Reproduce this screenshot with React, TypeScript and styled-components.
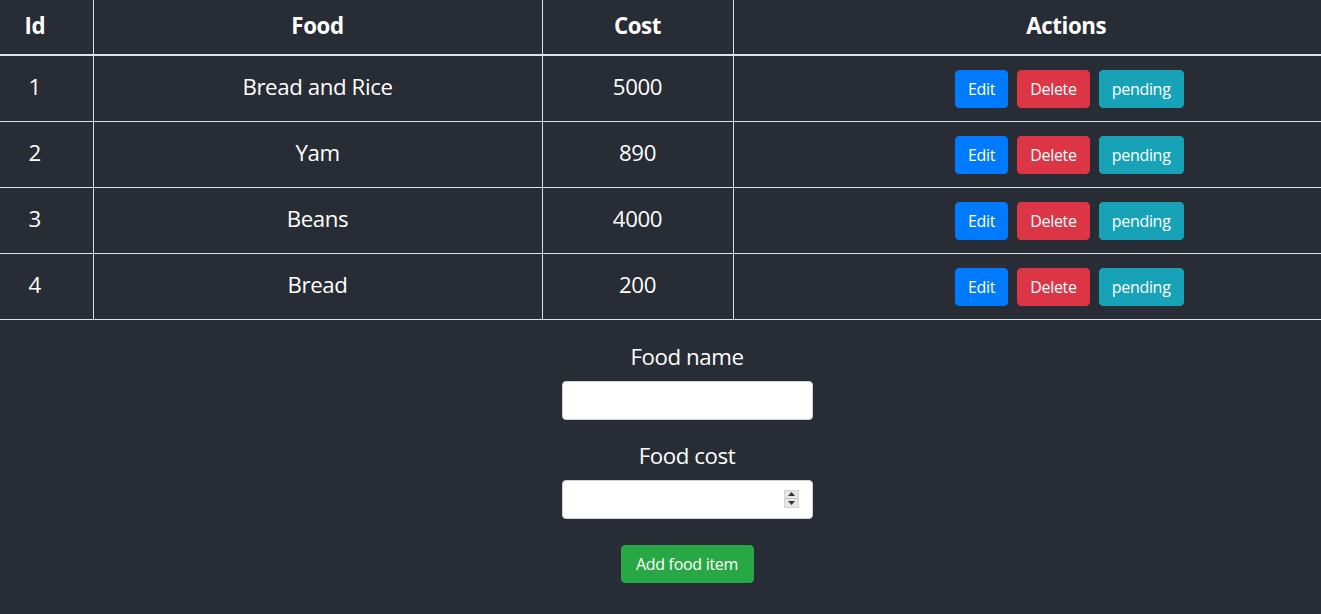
import React from "react";
import styled, { createGlobalStyle } from "styled-components";

const GlobalStyle = createGlobalStyle`
  html, body {
    margin: 0;
    padding: 0;
    background: #282c34;
    overflow: hidden;
  }
  body {
    font-family: "Open Sans", "Noto Sans", sans-serif;
    color: #ffffff;
  }
`;

const Page = styled.div`
  width: 1321px;
  min-height: 614px;
  background: #282c34;
  color: #fff;
  font-size: 22.28px;
`;

const Table = styled.table`
  width: 1321px;
  border-collapse: collapse;
  table-layout: fixed;
`;

const HeadCell = styled.th<{ $first?: boolean; $pl?: number; $pr?: number }>`
  height: 50px;
  padding: 0 ${(p) => p.$pr ?? 0}px 4px ${(p) => p.$pl ?? 0}px;
  font-weight: 700;
  font-size: 22.28px;
  letter-spacing: -0.4px;
  text-align: center;
  vertical-align: middle;
  border-bottom: 2px solid #dee2e6;
  border-left: ${(p) => (p.$first ? "none" : "1px solid #dee2e6")};
`;

const Row = styled.tr`
  height: 66px;
  & + & > td {
    border-top: 1px solid #dee2e6;
  }
`;

const Cell = styled.td<{ $first?: boolean; $pl?: number; $pr?: number }>`
  padding: 0 ${(p) => p.$pr ?? 0}px 3px ${(p) => p.$pl ?? 0}px;
  text-align: center;
  vertical-align: middle;
  letter-spacing: -0.4px;
  border-left: ${(p) => (p.$first ? "none" : "1px solid #dee2e6")};
  border-bottom: 1px solid #dee2e6;
`;

const ActionCell = styled(Cell)`
  padding-bottom: 0;
  padding-top: 1px;
`;

const Actions = styled.div`
  display: flex;
  justify-content: center;
  gap: 9px;
`;

const Button = styled.button<{ $bg: string }>`
  height: 38px;
  padding: 1px 12px 0;
  border: 1px solid ${(p) => p.$bg};
  border-radius: 4px;
  background: ${(p) => p.$bg};
  color: #fff;
  font-family: "Open Sans", "Noto Sans", sans-serif;
  font-size: 16px;
  letter-spacing: -0.3px;
  line-height: 1;
  cursor: pointer;
`;

const Form = styled.form`
  display: flex;
  flex-direction: column;
  align-items: center;
  padding-left: 53px;
  padding-top: 20px;
`;

const Label = styled.label<{ $mt?: number }>`
  font-size: 22.28px;
  letter-spacing: -0.4px;
  line-height: 33px;
  margin-top: ${(p) => p.$mt ?? 0}px;
  margin-bottom: 8px;
`;

const InputWrap = styled.div`
  position: relative;
  width: 251px;
  height: 39px;
`;

const Input = styled.input`
  box-sizing: border-box;
  width: 100%;
  height: 100%;
  border: 1px solid #ced4da;
  border-radius: 4px;
  background: #fff;
  padding: 6px 12px;
  font-size: 16px;
  outline: none;
  -moz-appearance: textfield;
  &::-webkit-inner-spin-button,
  &::-webkit-outer-spin-button {
    -webkit-appearance: none;
    margin: 0;
  }
`;

const Spinner = styled.div`
  position: absolute;
  right: 14px;
  top: 10px;
  width: 15px;
  height: 18px;
  display: flex;
  flex-direction: column;
  background: #e6e6e6;
  border: 1px solid #d4d4d4;
  box-sizing: border-box;
  pointer-events: none;
`;

const SpinHalf = styled.div`
  flex: 1;
  display: flex;
  align-items: center;
  justify-content: center;
  & + & {
    border-top: 1px solid #c8c8c8;
  }
`;

const AddButton = styled(Button)`
  margin-top: 26px;
  width: 133px;
  padding: 1px 0 0;
`;

const foods = [
  { id: 1, name: "Bread and Rice", cost: 5000 },
  { id: 2, name: "Yam", cost: 890 },
  { id: 3, name: "Beans", cost: 4000 },
  { id: 4, name: "Bread", cost: 200 },
];

export default function App() {
  return (
    <Page>
      <GlobalStyle />
      <Table>
        <colgroup>
          <col style={{ width: 93 }} />
          <col style={{ width: 449 }} />
          <col style={{ width: 191 }} />
          <col style={{ width: 588 }} />
        </colgroup>
        <thead>
          <tr>
            <HeadCell $first $pr={23}>Id</HeadCell>
            <HeadCell>Food</HeadCell>
            <HeadCell>Cost</HeadCell>
            <HeadCell $pl={78}>Actions</HeadCell>
          </tr>
        </thead>
        <tbody>
          {foods.map((f) => (
            <Row key={f.id}>
              <Cell $first $pr={23}>{f.id}</Cell>
              <Cell>{f.name}</Cell>
              <Cell>{f.cost}</Cell>
              <ActionCell $pl={84}>
                <Actions>
                  <Button $bg="#007bff" type="button">Edit</Button>
                  <Button $bg="#dc3545" type="button">Delete</Button>
                  <Button $bg="#17a2b8" type="button">pending</Button>
                </Actions>
              </ActionCell>
            </Row>
          ))}
        </tbody>
      </Table>
      <Form onSubmit={(e) => e.preventDefault()}>
        <Label>Food name</Label>
        <InputWrap>
          <Input type="text" />
        </InputWrap>
        <Label $mt={19}>Food cost</Label>
        <InputWrap>
          <Input type="number" />
          <Spinner>
            <SpinHalf>
              <svg width="7" height="4" viewBox="0 0 7 4">
                <path d="M3.5 0 L7 4 L0 4 Z" fill="#333" />
              </svg>
            </SpinHalf>
            <SpinHalf>
              <svg width="7" height="4" viewBox="0 0 7 4">
                <path d="M0 0 L7 0 L3.5 4 Z" fill="#333" />
              </svg>
            </SpinHalf>
          </Spinner>
        </InputWrap>
        <AddButton $bg="#28a745" type="submit">Add food item</AddButton>
      </Form>
    </Page>
  );
}
